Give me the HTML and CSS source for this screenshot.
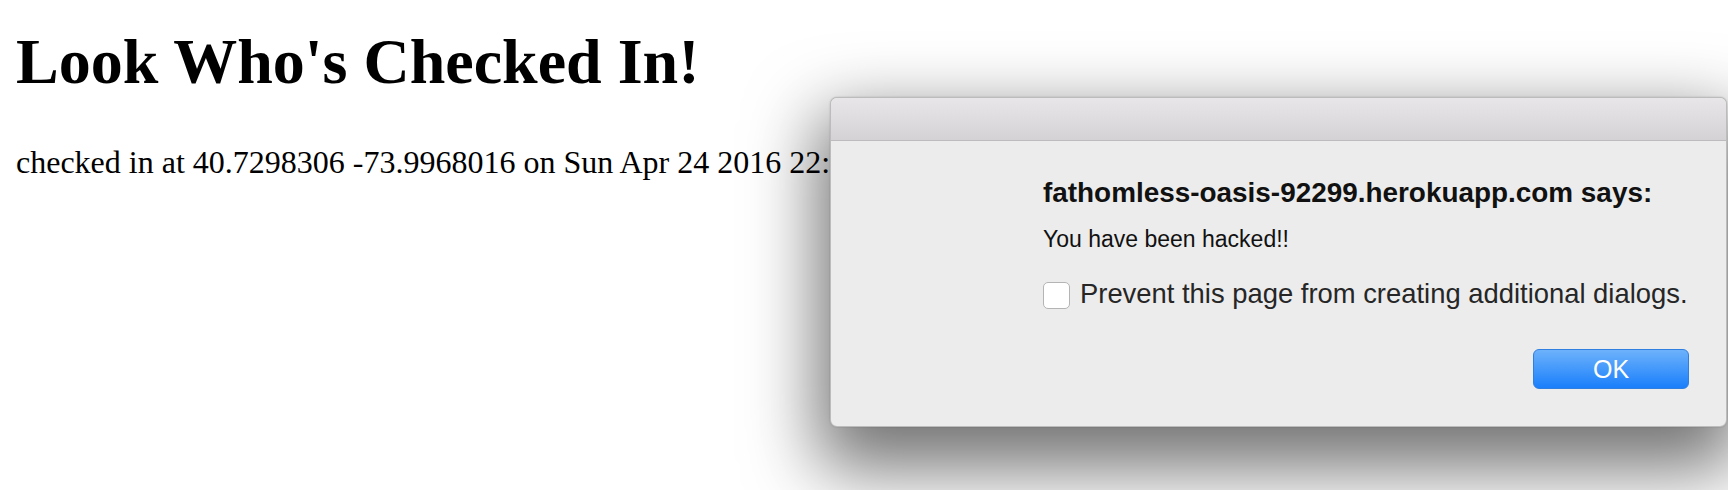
FILE: index.html
```html
<!DOCTYPE html>
<html>
<head>
<meta charset="utf-8">
<link rel="stylesheet" href="styles.css">
</head>
<body>
<h1 class="title">Look Who's Checked In!</h1>
<p class="checkin">checked in at 40.7298306 -73.9968016 on Sun Apr 24 2016 22:14:37 GMT-0400 (EDT)</p>

<div class="dialog">
  <div class="titlebar"></div>
  <div class="dialog-body">
    <div class="origin">fathomless-oasis-92299.herokuapp.com says:</div>
    <div class="message">You have been hacked!!</div>
    <label class="prevent">
      <span class="box"></span>
      <span class="prevent-text">Prevent this page from creating additional dialogs.</span>
    </label>
    <div class="actions">
      <button class="ok">OK</button>
    </div>
  </div>
</div>
</body>
</html>
```

FILE: styles.css
```css
html, body {
  margin: 0;
  padding: 0;
  background: #ffffff;
  overflow: hidden;
}
body {
  padding: 0 16px;
  font-family: "Liberation Serif", "Times New Roman", serif;
  color: #000;
}
.title {
  font-size: 64px;
  font-weight: bold;
  line-height: 74px;
  margin: 25px 0 45px;
  white-space: nowrap;
}
.checkin {
  font-size: 32px;
  line-height: 37px;
  margin: 0;
  white-space: nowrap;
}
.dialog {
  position: absolute;
  left: 830px;
  top: 97px;
  width: 897px;
  height: 330px;
  box-sizing: border-box;
  background: #ececec;
  border: 1px solid rgba(0,0,0,0.2);
  border-radius: 7px;
  box-shadow: 0 30px 70px 12px rgba(0,0,0,0.55), 0 0 2px rgba(0,0,0,0.2);
  display: flex;
  flex-direction: column;
  overflow: hidden;
  font-family: "Liberation Sans", Arial, sans-serif;
}
.titlebar {
  height: 42px;
  flex: none;
  background: linear-gradient(#e8e6e8, #d4d2d4);
  border-bottom: 1px solid #bdbbbd;
}
.dialog-body {
  flex: 1;
  display: flex;
  flex-direction: column;
  padding: 36px 37px 37px 212px;
}
.origin {
  font-size: 27.9px;
  font-weight: bold;
  line-height: 32px;
  color: #111;
  white-space: nowrap;
}
.message {
  margin-top: 17px;
  font-size: 23px;
  line-height: 26px;
  color: #111;
}
.prevent {
  margin-top: 26px;
  display: flex;
  align-items: center;
  gap: 10px;
  height: 32px;
}
.box {
  width: 25px;
  height: 25px;
  flex: none;
  background: #ffffff;
  border: 1px solid #b4b4b4;
  border-radius: 5px;
  margin-top: 2px;
}
.prevent-text {
  font-size: 27.4px;
  line-height: 32px;
  color: #262626;
  white-space: nowrap;
}
.actions {
  margin-top: auto;
  display: flex;
  justify-content: flex-end;
}
.ok {
  width: 156px;
  height: 40px;
  box-sizing: border-box;
  border: 1px solid #2f7fe0;
  border-radius: 6px;
  background: linear-gradient(#6db2fb, #1a7ffb);
  color: #ffffff;
  font-family: "Liberation Sans", Arial, sans-serif;
  font-size: 25px;
  line-height: 38px;
  padding: 0;
}
```
